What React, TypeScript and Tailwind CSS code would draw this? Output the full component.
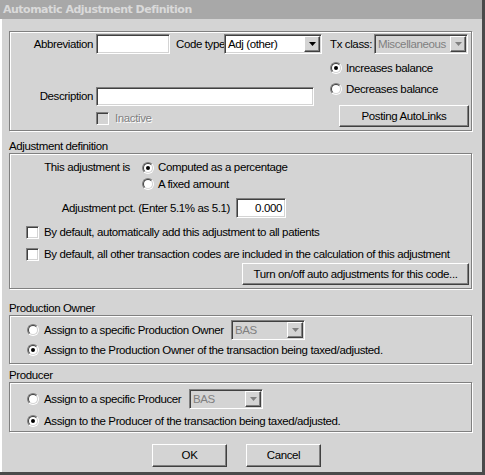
import type { ReactNode } from "react";

// no narrow face is installed, so Liberation Sans is tightened to the reference widths
const FONT = "font-['Liberation_Sans',Arial,sans-serif] text-[11.5px] tracking-[-0.38px]";

function Radio({ checked = false }: { checked?: boolean }) {
  return (
    <span className="inline-flex size-[12px] shrink-0 rounded-full border border-t-[#808080] border-l-[#808080] border-r-white border-b-white">
      <span className="flex size-full items-center justify-center rounded-full border border-t-[#404040] border-l-[#404040] border-r-[#d4d4d4] border-b-[#d4d4d4] bg-white">
        {checked && <span className="size-[4px] rounded-full bg-black" />}
      </span>
    </span>
  );
}

function Check({ disabled = false }: { disabled?: boolean }) {
  return (
    <span
      className={`inline-block size-[13px] shrink-0 border border-t-[#808080] border-l-[#808080] border-r-white border-b-white shadow-[inset_1px_1px_0_#404040,inset_-1px_-1px_0_#d4d4d4] ${
        disabled ? "bg-[#d4d4d4]" : "bg-white"
      }`}
    />
  );
}

function Field({ w, h = 20, children, right = false }: { w: string; h?: number; children?: ReactNode; right?: boolean }) {
  return (
    <div
      className={`${w} flex shrink-0 items-center border border-t-[#808080] border-l-[#808080] border-r-white border-b-white bg-white px-[3px] shadow-[inset_1px_1px_0_#404040,inset_-1px_-1px_0_#d4d4d4] ${
        right ? "justify-end" : ""
      } ${h === 19 ? "h-[19px]" : "h-[20px]"}`}
    >
      {children}
    </div>
  );
}

function Combo({ w, value, disabled = false }: { w: string; value: string; disabled?: boolean }) {
  return (
    <div
      className={`${w} flex h-[20px] shrink-0 items-stretch border border-t-[#808080] border-l-[#808080] border-r-white border-b-white p-[1px] shadow-[inset_1px_1px_0_#404040,inset_-1px_-1px_0_#d4d4d4] ${
        disabled ? "bg-[#d4d4d4] text-[#808080]" : "bg-white"
      }`}
    >
      <span className="flex-1 truncate pl-[2px] leading-[16px]">{value}</span>
      <span className="flex w-[16px] items-center justify-center border border-t-white border-l-white border-r-[#404040] border-b-[#404040] bg-[#d4d4d4] shadow-[inset_-1px_-1px_0_#808080]">
        <svg width="7" height="4" viewBox="0 0 7 4">
          <path d="M0 0h7L3.5 4z" fill={disabled ? "#808080" : "#000"} />
        </svg>
      </span>
    </div>
  );
}

function Button({ className, children }: { className: string; children: ReactNode }) {
  return (
    <div
      className={`${className} flex shrink-0 items-center justify-center border border-t-white border-l-white border-r-[#404040] border-b-[#404040] bg-[#d4d4d4] shadow-[inset_-1px_-1px_0_#808080]`}
    >
      {children}
    </div>
  );
}

const BOX = "border border-[#808080] shadow-[inset_1px_1px_0_white,1px_1px_0_white]";

export default function App() {
  return (
    <div
      className={`${FONT} flex h-[475px] w-[485px] flex-col overflow-hidden border-r-[3px] border-b-[3px] border-[#4a4a4a] bg-[#d4d4d4] leading-[13px] whitespace-nowrap text-black shadow-[inset_2px_0_0_white]`}
    >
      <div className="flex h-[19px] shrink-0 items-center bg-[#a8a8a8] pl-[3px] font-['DejaVu_Sans',sans-serif] text-[11px] font-bold tracking-[-0.5px] text-[#dadada]">
        Automatic Adjustment Definition
      </div>

      <div className="flex flex-col pl-[9px]">
        {/* top box */}
        <div className={`${BOX} mt-[12px] flex h-[100px] w-[463px] flex-col pt-[2px]`}>
          <div className="flex h-[20px] items-center">
            <span className="w-[84px] pr-[1px] text-right">Abbreviation</span>
            <span className="w-[2px]" />
            <Field w="w-[74px]" />
            <span className="ml-[6px] w-[48px]">Code type</span>
            <Combo w="w-[98px]" value="Adj (other)" />
            <span className="ml-[8px] w-[44px]">Tx class:</span>
            <Combo w="w-[94px]" value="Miscellaneous" disabled />
          </div>
          <div className="flex">
            <div className="flex w-[320px] flex-col">
              <div className="mt-[33px] flex h-[19px] items-center">
                <span className="w-[84px] pr-[1px] text-right">Description</span>
                <span className="w-[2px]" />
                <Field w="w-[218px]" h={19} />
              </div>
              <div className="mt-[6px] flex h-[13px] items-center pl-[86px]">
                <Check disabled />
                <span className="ml-[6px] text-[#808080] [text-shadow:1px_1px_0_white]">Inactive</span>
              </div>
            </div>
            <div className="flex flex-col">
              <div className="mt-[6px] flex h-[16px] items-center gap-[4px]">
                <Radio checked />
                <span>Increases balance</span>
              </div>
              <div className="mt-[5px] flex h-[16px] items-center gap-[4px]">
                <Radio />
                <span>Decreases balance</span>
              </div>
              <Button className="mt-[8px] ml-[9px] h-[22px] w-[130px]">Posting AutoLinks</Button>
            </div>
          </div>
        </div>

        {/* adjustment definition */}
        <div className="mt-[9px] h-[13px]">Adjustment definition</div>
        <div className={`${BOX} flex h-[136px] w-[463px] flex-col pt-[5px]`}>
          <div className="flex h-[16px] items-center">
            <span className="w-[120px] text-right">This adjustment is</span>
            <span className="ml-[12px]">
              <Radio checked />
            </span>
            <span className="ml-[4px]">Computed as a percentage</span>
          </div>
          <div className="mt-[1px] flex h-[16px] items-center pl-[132px]">
            <Radio />
            <span className="ml-[4px]">A fixed amount</span>
          </div>
          <div className="mt-[6px] flex h-[20px] items-center">
            <span className="w-[220px] text-right">Adjustment pct. (Enter 5.1% as 5.1)</span>
            <span className="ml-[6px]">
              <Field w="w-[50px]" right>
                0.000
              </Field>
            </span>
          </div>
          <div className="mt-[6px] flex h-[16px] items-center pl-[16px]">
            <Check />
            <span className="ml-[5px]">By default, automatically add this adjustment to all patients</span>
          </div>
          <div className="mt-[6px] flex h-[16px] items-center pl-[16px]">
            <Check />
            <span className="ml-[5px]">
              By default, all other transaction codes are included in the calculation of this adjustment
            </span>
          </div>
          <Button className="mt-[1px] ml-[232px] h-[22px] w-[227px]">
            Turn on/off auto adjustments for this code...
          </Button>
        </div>

        {/* production owner */}
        <div className="mt-[13px] h-[13px]">Production Owner</div>
        <div className={`${BOX} flex h-[49px] w-[463px] flex-col pt-[4px]`}>
          <div className="flex h-[20px] items-center pl-[17px]">
            <Radio />
            <span className="ml-[5px] w-[187px]">Assign to a specific Production Owner</span>
            <Combo w="w-[74px]" value="BAS" disabled />
          </div>
          <div className="mt-[2px] flex h-[16px] items-center pl-[17px]">
            <Radio checked />
            <span className="ml-[5px]">Assign to the Production Owner of the transaction being taxed/adjusted.</span>
          </div>
        </div>

        {/* producer */}
        <div className="mt-[5px] h-[13px]">Producer</div>
        <div className={`${BOX} flex h-[50px] w-[463px] flex-col pt-[6px]`}>
          <div className="flex h-[20px] items-center pl-[17px]">
            <Radio />
            <span className="ml-[5px] w-[145px]">Assign to a specific Producer</span>
            <Combo w="w-[74px]" value="BAS" disabled />
          </div>
          <div className="mt-[4px] flex h-[16px] items-center pl-[17px]">
            <Radio checked />
            <span className="ml-[5px]">Assign to the Producer of the transaction being taxed/adjusted.</span>
          </div>
        </div>

        <div className="mt-[12px] flex gap-[19px] pl-[143px]">
          <Button className="h-[23px] w-[75px]">OK</Button>
          <Button className="h-[23px] w-[75px]">Cancel</Button>
        </div>
      </div>
    </div>
  );
}
